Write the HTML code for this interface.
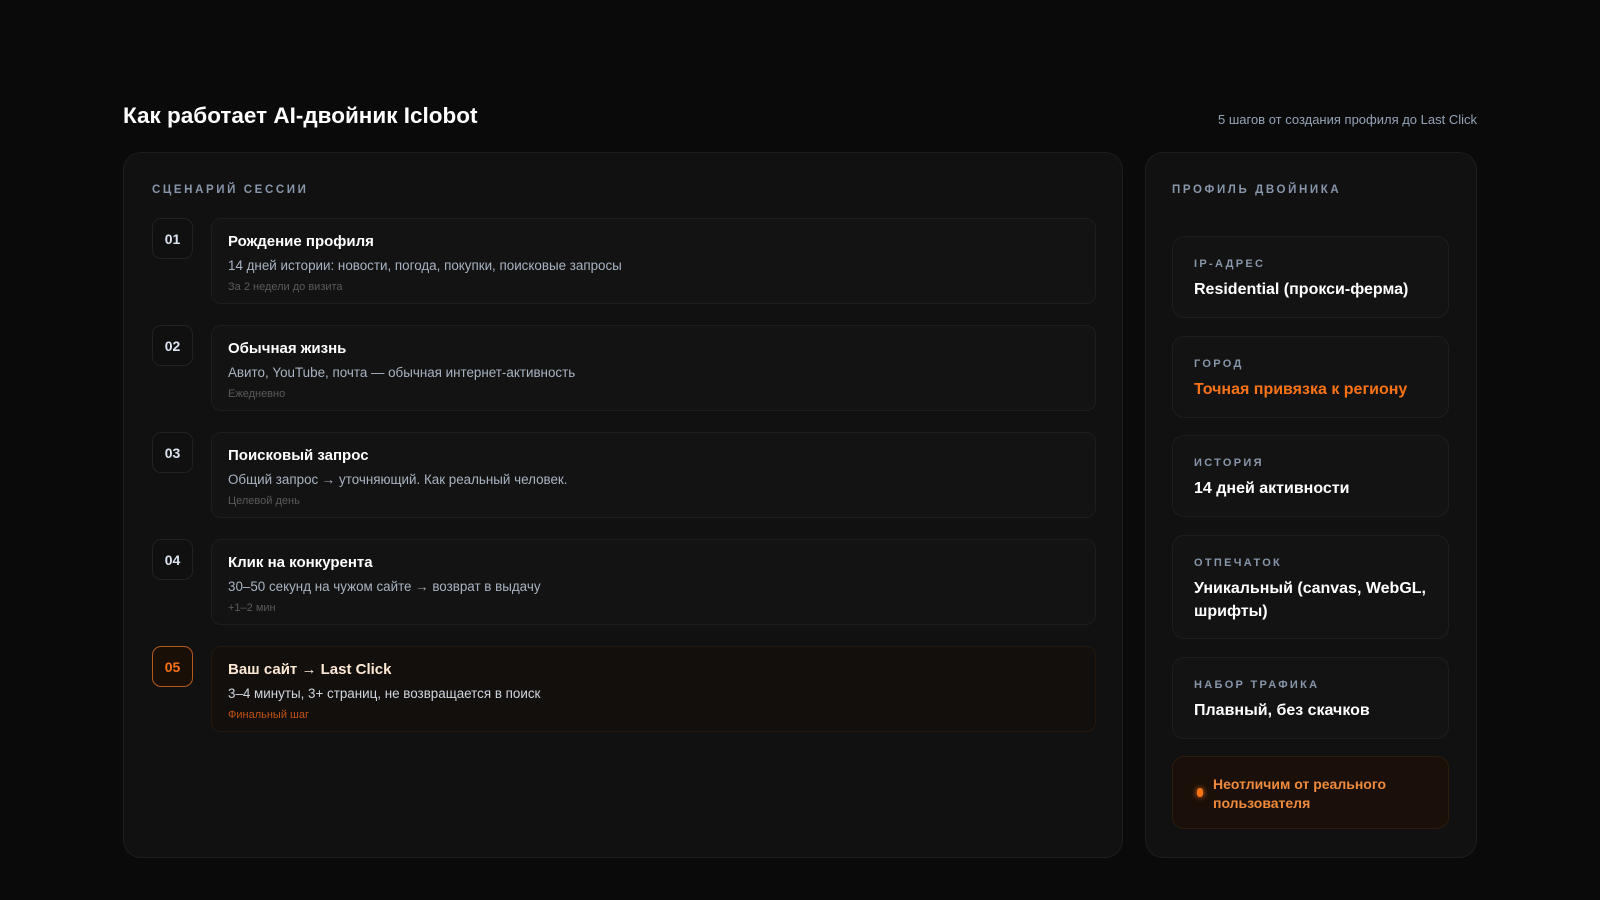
<!DOCTYPE html>
<html><head><meta charset="utf-8"><style>
*{box-sizing:border-box;margin:0;padding:0}
body{width:1600px;height:900px;background:#0a0a0a;font-family:"Liberation Sans","DejaVu Sans",sans-serif;color:#f2f2f2;position:relative;overflow:hidden}
.abs{position:absolute}
h1{position:absolute;left:123px;top:103px;font-size:22.5px;font-weight:700;color:#fff}
.sub{position:absolute;right:123px;top:112px;font-size:13px;color:#94a3b8}
.card{position:absolute;top:152px;height:706px;background:#111111;border:1px solid #1d1d1d;border-radius:18px}
.lab{position:absolute;font-size:11.5px;font-weight:700;letter-spacing:2.6px;color:#8796aa}
.badge{position:absolute;left:28px;width:41px;height:41px;border:1px solid #222;border-radius:9px;background:#101010;font-size:14px;font-weight:700;color:#dbe4f0;text-align:center;line-height:40px}
.step{position:absolute;left:87px;width:885px;height:86px;border:1px solid #1e1e1e;border-radius:10px;background:#131313;padding:14px 0 0 16px}
.t{font-size:15px;font-weight:700;color:#fff}
.d{font-size:13.4px;color:#a8b3c2;margin-top:8px}
.m{font-size:11px;color:#5a5a5a;margin-top:8px}
.item{position:absolute;left:26px;width:277px;border:1px solid #1e1e1e;border-radius:12px;background:#131313;padding:21px 0 0 21px}
.il{font-size:11px;font-weight:700;letter-spacing:2.3px;color:#8796aa}
.iv{font-size:16px;font-weight:700;color:#fff;margin-top:8px;line-height:23px}
</style></head><body>
<h1>Как работает AI-двойник Iclobot</h1>
<div class="sub">5 шагов от создания профиля до Last Click</div>
<div class="card" style="left:123px;width:1000px">
<div class="lab" style="left:28px;top:31px">СЦЕНАРИЙ СЕССИИ</div>
<div class="badge" style="top:65px">01</div>
<div class="step" style="top:65px"><div class="t">Рождение профиля</div><div class="d">14 дней истории: новости, погода, покупки, поисковые запросы</div><div class="m">За 2 недели до визита</div></div>
<div class="badge" style="top:172px">02</div>
<div class="step" style="top:172px"><div class="t">Обычная жизнь</div><div class="d">Авито, YouTube, почта — обычная интернет-активность</div><div class="m">Ежедневно</div></div>
<div class="badge" style="top:279px">03</div>
<div class="step" style="top:279px"><div class="t">Поисковый запрос</div><div class="d">Общий запрос → уточняющий. Как реальный человек.</div><div class="m">Целевой день</div></div>
<div class="badge" style="top:386px">04</div>
<div class="step" style="top:386px"><div class="t">Клик на конкурента</div><div class="d">30–50 секунд на чужом сайте → возврат в выдачу</div><div class="m">+1–2 мин</div></div>
<div class="badge" style="top:493px;border-color:#b45a1c;background:#1a0f07;color:#f97316">05</div>
<div class="step" style="top:493px;border-color:#24180e;background:#120f0c"><div class="t" style="color:#fde8d4">Ваш сайт → Last Click</div><div class="d" style="color:#d0d6de">3–4 минуты, 3+ страниц, не возвращается в поиск</div><div class="m" style="color:#c2510f">Финальный шаг</div></div>
</div>
<div class="card" style="left:1145px;width:332px">
<div class="lab" style="left:26px;top:31px">ПРОФИЛЬ ДВОЙНИКА</div>
<div class="item" style="top:83px;height:82px"><div class="il">IP-АДРЕС</div><div class="iv">Residential (прокси-ферма)</div></div>
<div class="item" style="top:183px;height:82px"><div class="il">ГОРОД</div><div class="iv" style="color:#f97316">Точная привязка к региону</div></div>
<div class="item" style="top:282px;height:82px"><div class="il">ИСТОРИЯ</div><div class="iv">14 дней активности</div></div>
<div class="item" style="top:382px;height:104px"><div class="il">ОТПЕЧАТОК</div><div class="iv">Уникальный (canvas, WebGL,<br>шрифты)</div></div>
<div class="item" style="top:504px;height:82px"><div class="il">НАБОР ТРАФИКА</div><div class="iv">Плавный, без скачков</div></div>
<div class="item" style="top:603px;height:73px;background:#1a1009;border-color:#2e1c0c;padding:18px 0 0 40px">
<div class="abs" style="left:24px;top:31px;width:6px;height:9px;border-radius:3px;background:#f97316;box-shadow:0 0 6px #f97316"></div>
<div style="font-size:14px;font-weight:700;color:#f08a3c;line-height:19px">Неотличим от реального<br>пользователя</div></div>
</div>
</body></html>
